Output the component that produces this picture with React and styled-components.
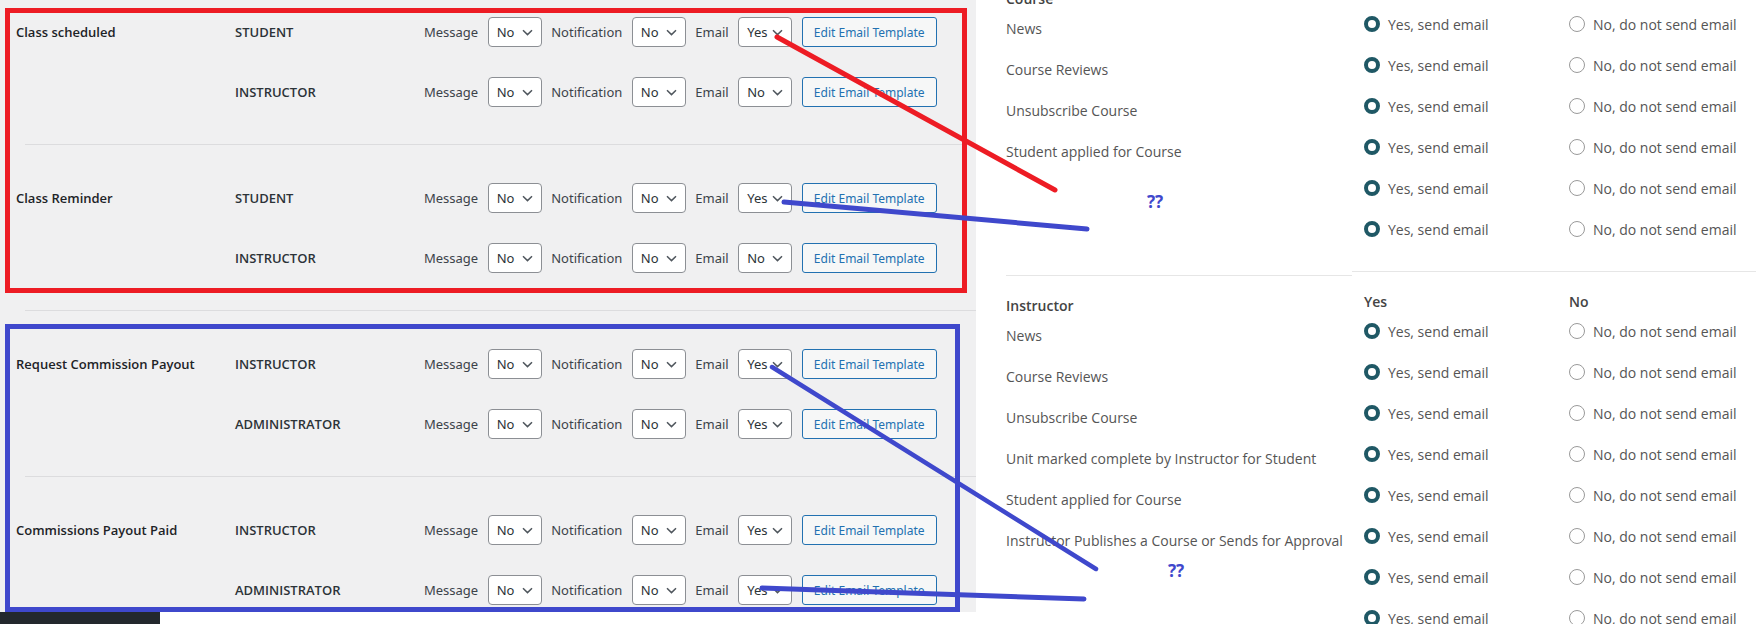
import React from 'react'
import styled, { createGlobalStyle } from 'styled-components'

const GlobalStyle = createGlobalStyle`
  html, body {
    margin: 0;
    padding: 0;
    background: #fff;
  }
  body {
    width: 1756px;
    height: 624px;
    overflow: hidden;
  }
`

const Page = styled.div`
  position: relative;
  display: flex;
  width: 1756px;
  height: 624px;
  overflow: hidden;
`

/* ---------- left: admin notification settings ---------- */

const AdminPane = styled.div`
  width: 976px;
  flex-shrink: 0;
  display: flex;
  flex-direction: column;
`

const SettingsPanel = styled.div`
  height: 612px;
  background: #f0f0f1;
  overflow: hidden;
  font-family: "Noto Sans", sans-serif;
  font-size: 13px;
  color: #1d2327;
`

const MenuFoot = styled.div`
  width: 160px;
  height: 12px;
  background: #23282d;
`

const Group = styled.div`
  padding: ${p => (p.$first ? '2px' : '23px')} 0 22px;
`

const Divider = styled.div`
  height: 1px;
  margin-left: 25px;
  background: #dcdcde;
`

const Row = styled.div`
  display: grid;
  grid-template-columns: 219px 189px auto;
  align-items: center;
  height: 60px;
  padding-left: 16px;
`

const EventName = styled.div`
  font-family: "Open Sans", sans-serif;
  font-size: 13px;
  font-weight: 600;
  color: #1d2327;
  white-space: nowrap;
`

const Role = styled(EventName)`
  color: #2c3338;
`

const Controls = styled.div`
  display: flex;
  align-items: center;
  gap: 9.5px;
`

const FieldLabel = styled.span`
  color: #3c434a;
  margin-top: -1px;
`

const Select = styled.div`
  box-sizing: border-box;
  display: flex;
  align-items: center;
  justify-content: space-between;
  width: 54px;
  height: 30px;
  padding: 0 8px;
  border: 1px solid #8c8f94;
  border-radius: 4px;
  background: #fff;
  color: #2c3338;
  font-size: 13px;
`

const TemplateButton = styled.button`
  box-sizing: border-box;
  height: 30px;
  width: 135px;
  padding: 0 10px;
  border: 1px solid #2271b1;
  border-radius: 3px;
  background: #f6f7f7;
  color: #2271b1;
  font-family: "Noto Sans", sans-serif;
  font-size: 12px;
  white-space: nowrap;
`

const Chevron = () => (
  <svg width="11" height="7" viewBox="0 0 11 7">
    <path d="M1 1.2 L5.5 5.6 L10 1.2" fill="none" stroke="#50575e" strokeWidth="1.5" />
  </svg>
)

const Dropdown = ({ value }) => (
  <Select>
    <span>{value}</span>
    <Chevron />
  </Select>
)

const groups = [
  { event: 'Class scheduled', rows: [['STUDENT', 'No', 'No', 'Yes'], ['INSTRUCTOR', 'No', 'No', 'No']] },
  { event: 'Class Reminder', rows: [['STUDENT', 'No', 'No', 'Yes'], ['INSTRUCTOR', 'No', 'No', 'No']] },
  { event: 'Request Commission Payout', rows: [['INSTRUCTOR', 'No', 'No', 'Yes'], ['ADMINISTRATOR', 'No', 'No', 'Yes']] },
  { event: 'Commissions Payout Paid', rows: [['INSTRUCTOR', 'No', 'No', 'Yes'], ['ADMINISTRATOR', 'No', 'No', 'Yes']] },
]

/* ---------- right: member email preferences ---------- */

const PrefsPane = styled.div`
  flex: 1;
  display: flex;
  align-items: flex-start;
  padding-left: 30px;
  font-family: "Open Sans", sans-serif;
  font-size: 14px;
  color: #555;
`

const LabelColumn = styled.div`
  width: 346px;
  flex-shrink: 0;
  margin-top: -31px;
`

const ChoiceColumn = styled.div`
  width: 404px;
  flex-shrink: 0;
  margin-top: 15px;
`

const Section = styled.div`
  padding: ${p => (p.$first ? '0' : '20px')} 0 10px;
  border-bottom: 1px solid #e6e6e6;
`

const SectionHead = styled.div`
  height: 20px;
  line-height: 20px;
  margin-bottom: 10px;
  font-weight: 600;
  color: #444;
`

const ChoiceHead = styled(SectionHead)`
  display: grid;
  grid-template-columns: 205px auto;
  padding-left: 12px;
`

const LabelRow = styled.div`
  height: 41px;
  line-height: 20px;
  white-space: nowrap;
`

const ChoiceRow = styled.div`
  height: 41px;
  display: grid;
  grid-template-columns: 205px auto;
  align-items: start;
  padding-left: 12px;
`

const Choice = styled.label`
  display: flex;
  align-items: center;
  gap: 8px;
  height: 20px;
  line-height: 20px;
  white-space: nowrap;
`

const Radio = styled.span`
  box-sizing: border-box;
  width: 16px;
  height: 16px;
  margin-top: -3px;
  border-radius: 50%;
  background: #fff;
  border: ${p => (p.$checked ? '4.5px solid #1f5865' : '1px solid #9a9a9a')};
`

const labelSections = [
  { head: 'Course', slots: 6, items: ['News', 'Course Reviews', 'Unsubscribe Course', 'Student applied for Course'] },
  {
    head: 'Instructor',
    slots: 8,
    items: [
      'News',
      'Course Reviews',
      'Unsubscribe Course',
      'Unit marked complete by Instructor for Student',
      'Student applied for Course',
      'Instructor Publishes a Course or Sends for Approval',
    ],
  },
]

const choiceSections = [6, 8]

/* ---------- annotation markup drawn over the screenshot ---------- */

const Markup = styled.svg`
  position: absolute;
  left: 0;
  top: 0;
  pointer-events: none;
`

const MarkText = styled.text`
  font-family: "Noto Sans", sans-serif;
  font-size: 17px;
  font-weight: 700;
  fill: #3f48cc;
`

export default function App() {
  return (
    <>
      <GlobalStyle />
      <Page>
        <AdminPane>
          <SettingsPanel>
            {groups.map((g, gi) => (
              <React.Fragment key={g.event}>
                {gi > 0 && <Divider />}
                <Group $first={gi === 0}>
                  {g.rows.map(([role, msg, note, mail], ri) => (
                    <Row key={role}>
                      <EventName>{ri === 0 ? g.event : ''}</EventName>
                      <Role>{role}</Role>
                      <Controls>
                        <FieldLabel>Message</FieldLabel>
                        <Dropdown value={msg} />
                        <FieldLabel>Notification</FieldLabel>
                        <Dropdown value={note} />
                        <FieldLabel>Email</FieldLabel>
                        <Dropdown value={mail} />
                        <TemplateButton>Edit Email Template</TemplateButton>
                      </Controls>
                    </Row>
                  ))}
                </Group>
              </React.Fragment>
            ))}
          </SettingsPanel>
          <MenuFoot />
        </AdminPane>

        <PrefsPane>
          <LabelColumn>
            {labelSections.map(s => (
              <Section key={s.head}>
                <SectionHead>{s.head}</SectionHead>
                {Array.from({ length: s.slots }).map((_, i) => (
                  <LabelRow key={i}>{s.items[i] || ''}</LabelRow>
                ))}
              </Section>
            ))}
          </LabelColumn>
          <ChoiceColumn>
            {choiceSections.map((count, si) => (
              <Section key={si} $first={si === 0}>
                {si > 0 && (
                  <ChoiceHead>
                    <span>Yes</span>
                    <span>No</span>
                  </ChoiceHead>
                )}
                {Array.from({ length: count }).map((_, i) => (
                  <ChoiceRow key={i}>
                    <Choice>
                      <Radio $checked />
                      Yes, send email
                    </Choice>
                    <Choice>
                      <Radio />
                      No, do not send email
                    </Choice>
                  </ChoiceRow>
                ))}
              </Section>
            ))}
          </ChoiceColumn>
        </PrefsPane>

        <Markup width="1756" height="624" viewBox="0 0 1756 624">
          <rect x="7.5" y="10.5" width="957" height="280" fill="none" stroke="#ed1c24" strokeWidth="5" />
          <rect x="7.5" y="326.5" width="950" height="283" fill="none" stroke="#3f48cc" strokeWidth="5" />
          <line x1="777" y1="37" x2="1055" y2="190" stroke="#ed1c24" strokeWidth="5" strokeLinecap="round" />
          <line x1="784" y1="202" x2="1087" y2="229" stroke="#3f48cc" strokeWidth="5" strokeLinecap="round" />
          <line x1="772" y1="367" x2="1096" y2="569" stroke="#3f48cc" strokeWidth="4.5" strokeLinecap="round" />
          <line x1="762" y1="588" x2="1084" y2="599" stroke="#3f48cc" strokeWidth="5" strokeLinecap="round" />
          <MarkText x="1155" y="208" textAnchor="middle">??</MarkText>
          <MarkText x="1176" y="577" textAnchor="middle">??</MarkText>
        </Markup>
      </Page>
    </>
  )
}
